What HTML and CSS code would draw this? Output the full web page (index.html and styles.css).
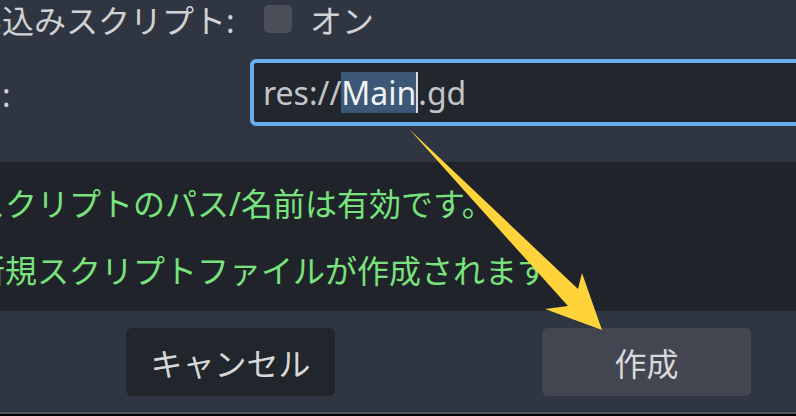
FILE: index.html
```html
<!DOCTYPE html>
<html lang="ja">
<head>
  <meta charset="UTF-8" />
  <meta name="viewport" content="width=device-width, initial-scale=1.0"/>
  <title>スクリプトを作成</title>
  <link rel="stylesheet" href="styles.css">
</head>
<body>
  <div class="dialog">
    <div class="form">
      <div class="label">組み込みスクリプト:</div>
      <label class="check"><span class="box"></span>オン</label>

      <div class="label">パス:</div>
      <div class="path-input">
        <span>res://</span><span class="sel">Main</span><span class="caret"></span><span>.gd</span>
      </div>
    </div>

    <div class="messages">
      <p>スクリプトのパス/名前は有効です。</p>
      <p>新規スクリプトファイルが作成されます。</p>
    </div>

    <div class="buttons">
      <button class="btn cancel">キャンセル</button>
      <button class="btn create">作成</button>
    </div>
  </div>

  <!-- annotation arrow drawn over the dialog -->
  <svg class="arrow" viewBox="0 0 796 416" width="796" height="416">
    <polygon points="409,129 578,289 582,273 602,330 545,309 568,306" fill="#ffd43b"/>
  </svg>
</body>
</html>
```

FILE: styles.css
```css
html, body {
  margin: 0;
  height: 100%;
  overflow: hidden;
}
body {
  position: relative;
  background: #000;
  font-family: "Noto Sans", "Noto Sans CJK JP", sans-serif;
  font-size: 32px;
  color: #cfd1d4;
}
.dialog {
  margin-left: -62px;
  width: 920px;
  height: 412px;
  background: #303641;
  border-bottom: 2px solid #50555e;
  display: flex;
  flex-direction: column;
}
.form {
  display: grid;
  grid-template-columns: 312px 1fr;
  grid-template-rows: 38px 67px;
  row-gap: 21px;
  align-items: center;
  margin-bottom: 36px;
}
.label {
  white-space: nowrap;
}
.check {
  display: flex;
  align-items: center;
  gap: 18px;
  padding-left: 14px;
}
.box {
  width: 28px;
  height: 28px;
  border-radius: 5px;
  background: #4b4f5a;
}
.path-input {
  box-sizing: border-box;
  height: 67px;
  border: 4px solid #68adec;
  border-radius: 6px;
  background: #22262d;
  padding-left: 9px;
  display: flex;
  align-items: center;
  white-space: nowrap;
  color: #c2c4c7;
}
.sel {
  display: inline-block;
  line-height: 41px;
  background: #3d5877;
  color: #f2f3f4;
}
.caret {
  width: 2px;
  height: 41px;
  background: #d8d9db;
}
.messages {
  height: 149px;
  box-sizing: border-box;
  background: #20232a;
  padding: 20px 0 17px 35px;
  display: flex;
  flex-direction: column;
  gap: 23px;
  color: #78e27c;
}
.messages p {
  margin: 0;
  height: 44px;
  line-height: 44px;
  white-space: nowrap;
}
.buttons {
  display: flex;
  gap: 207px;
  padding: 17px 0 0 188px;
}
.btn {
  width: 209px;
  height: 68px;
  border: none;
  border-radius: 6px;
  font-family: inherit;
  font-size: 32px;
  color: #d7d8da;
}
.cancel {
  background: #21252c;
}
.create {
  background: #434651;
}
.arrow {
  position: absolute;
  left: 0;
  top: 0;
}
```
